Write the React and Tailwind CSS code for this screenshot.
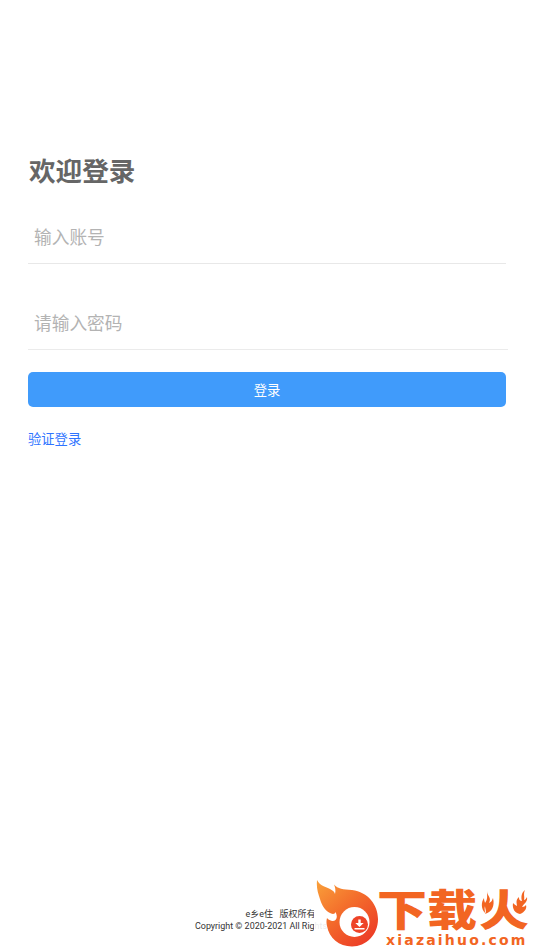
import { useState } from 'react'

function FlameLogo() {
    return (
        <svg width="68" height="72" viewBox="2 2 68 72" className="shrink-0">
            <defs>
                <linearGradient id="flame" x1="0" y1="0" x2="0.8" y2="1">
                    <stop offset="0" stopColor="#f9a13a" />
                    <stop offset="0.45" stopColor="#f4702c" />
                    <stop offset="1" stopColor="#ec3a26" />
                </linearGradient>
            </defs>
            <path
                fill="url(#flame)"
                d="M5 4C8 10 14 11 18 13C21 14.500 22.500 16 23 18C24 14 23 11 22 8.500C26 13 31 13.500 40 14C56 16 66 29 66 43C66 59 54 70.500 40 70.500C27 70.500 17 62 15 50C14.300 47 14.300 44.500 15 42C17 44.500 21 46 23.500 44C25.500 42 25 39 23.500 36C23 38.500 20 38.500 17 36.500C12 34 9 27 7 20C5 14 4.500 9 5 4Z"
            />
            <circle cx="42.500" cy="46" r="15" fill="#fff" />
            <circle cx="47.500" cy="48.500" r="8.500" fill="#ee4327" />
            <path fill="#fff" d="M46.300 43.500h2.400v3.500h3l-4.200 4-4.200-4h3zM42.500 52h10v1.500h-10z" />
        </svg>
    )
}

// the two dots of 火 are drawn as little flames
function FireDots() {
    return (
        <svg viewBox="0 0 50 26" className="absolute top-[11px] left-[101px] h-[26px] w-[50px]">
            <path fill="#fff" d="M0 0H18V18L13 26H0ZM30.500 0H50V27H40L30.500 20Z" />
            <g fill="#f26522">
                <path transform="translate(2)" d="M7 2C7 7 12 8 9 14C12 13 12 11 13 9C15 17 12 23 5 25C7 22 5 20 5 17C4 20 5 21 5 24C1 20 1 13 4 9C4 12 5 13 5 14C8 10 7 7 7 2Z" />
                <path transform="translate(1)" d="M46 1C42 4 42 9 43 12C40 12 40 9 40 8C36 11 38 15 38 17C36 16 35 15 34 14C33 20 36 24 41 25C46 23 48 19 47 16C46 17 45 18 43 18C45 14 49 13 48 8C47 10 46 11 45 11C46 8 44 5 46 1Z" />
            </g>
        </svg>
    )
}

export default function App() {
    const [account, setAccount] = useState('')
    const [password, setPassword] = useState('')

    return (
        <div className="relative flex h-[950px] w-[534px] flex-col overflow-hidden bg-white px-7 font-['Roboto','Noto_Sans_CJK_SC',sans-serif]">
            <h1 className="mt-[152px] h-10 pl-px text-[26.6px] leading-10 font-bold text-[#666]">欢迎登录</h1>

            <input
                value={account}
                onChange={(e) => setAccount(e.target.value)}
                placeholder="输入账号"
                className="mt-[17px] h-[55px] border-b border-[#e8e8e8] px-1.5 pt-[3px] text-[17.7px] outline-none placeholder:text-[#b3b3b3]"
            />
            <input
                type="password"
                value={password}
                onChange={(e) => setPassword(e.target.value)}
                placeholder="请输入密码"
                className="mt-[31px] -mr-0.5 h-[55px] border-b border-[#ebebeb] px-1.5 pt-[3px] text-[17.7px] outline-none placeholder:text-[#b3b3b3]"
            />

            <button className="mt-[22px] h-[35px] rounded-[5px] bg-[#409bfb] pt-0.5 text-[13.3px] text-white">登录</button>

            <a href="#" className="mt-[23px] self-start text-[13.3px] leading-5 text-[#2f74ff]">验证登录</a>

            <footer className="mt-auto mb-[17px] flex flex-col items-center pl-[27px] text-[8.95px] leading-[13px] text-[#333]">
                <p className="pt-px leading-3 whitespace-pre">e乡e住   版权所有</p>
                <p>Copyright © 2020-2021 All Rights Reserved</p>
            </footer>

            <div className="absolute right-0 bottom-0 flex h-[72px] w-[220px] bg-white/90 text-[#f26522]">
                <FlameLogo />
                <div className="relative -ml-[5px] flex flex-col">
                    <div className="mt-[17px] h-[37px] origin-top-left scale-y-[0.86] text-[50px] leading-[38px] font-black whitespace-nowrap">
                        下载<span className="ml-0.5">火</span>
                    </div>
                    <div className="ml-[9px] font-['DejaVu_Sans',sans-serif] text-[14px] leading-4 font-bold tracking-[2.2px]">xiazaihuo.com</div>
                    <FireDots />
                </div>
            </div>
        </div>
    )
}
